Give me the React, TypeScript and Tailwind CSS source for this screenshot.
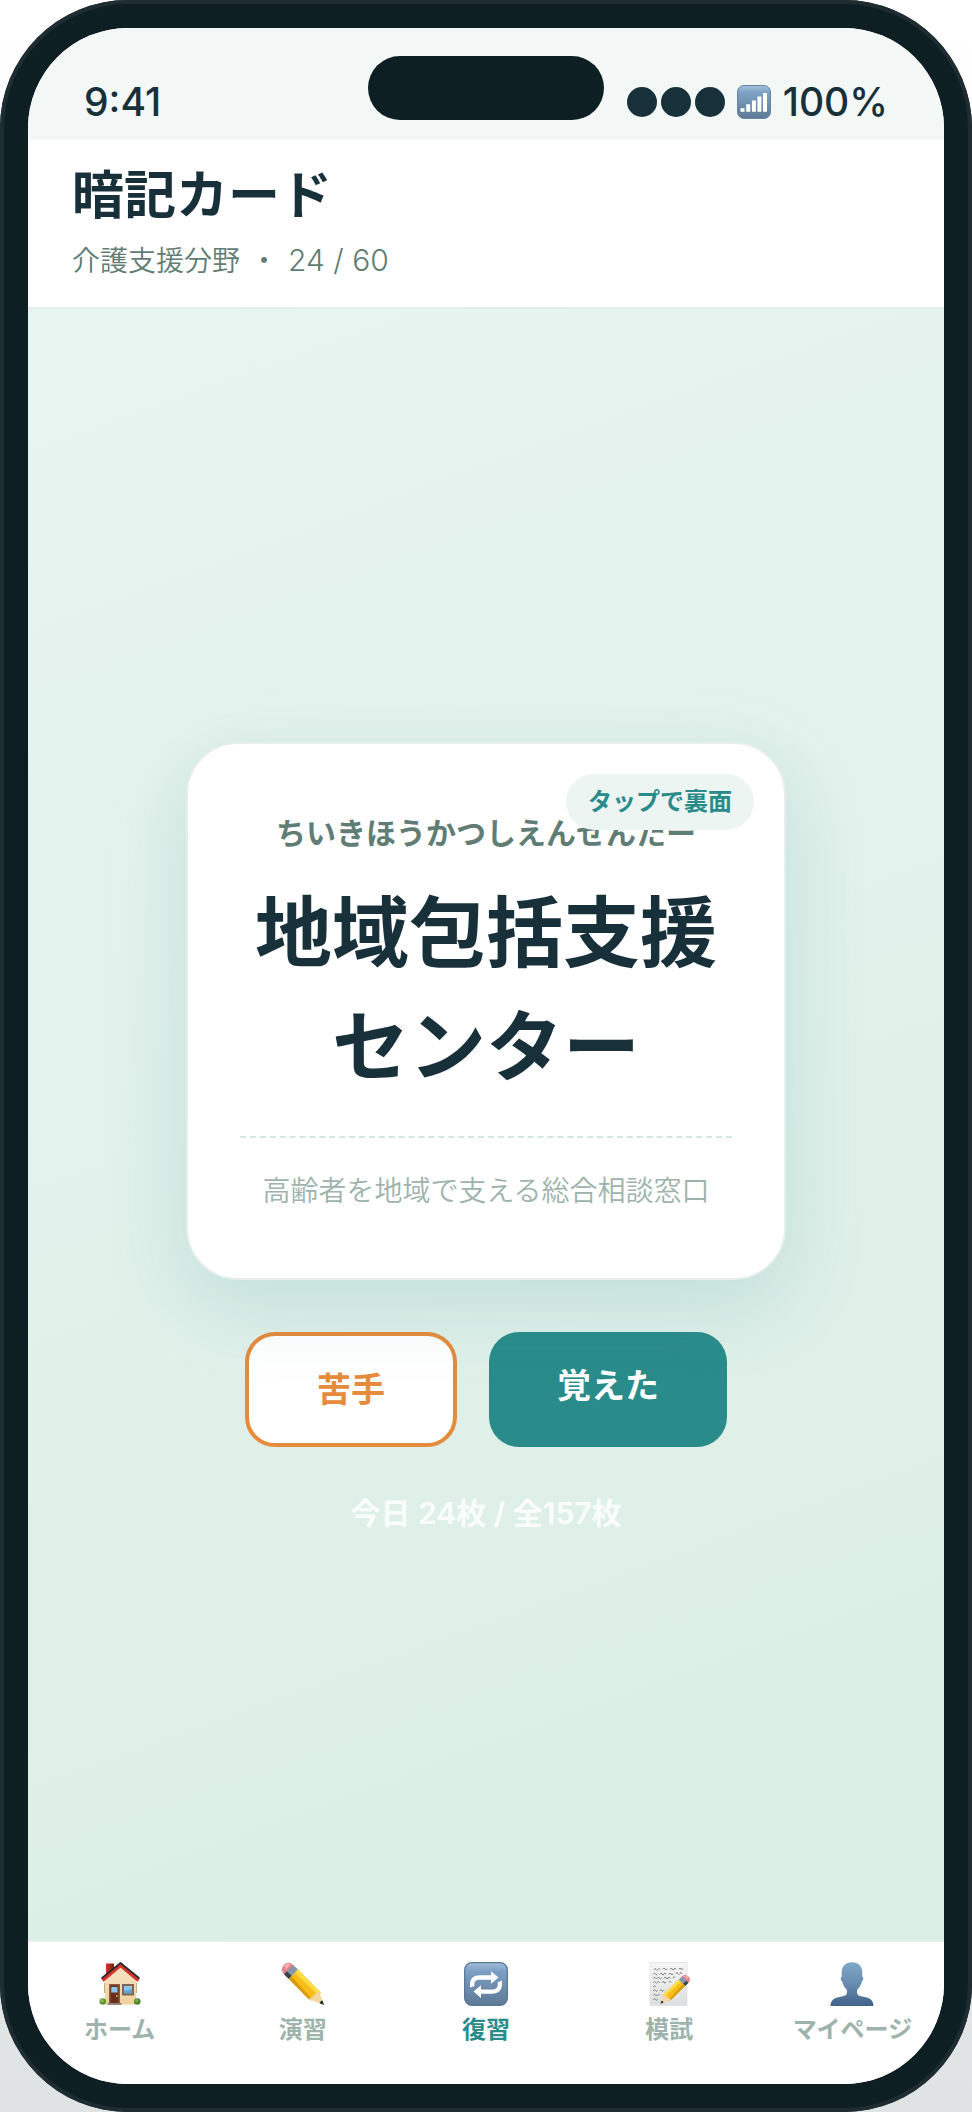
import type { ReactNode } from 'react';

function SignalIcon() {
  return (
    <svg viewBox="0 0 34 34" className="h-[34px] w-[34px]" aria-hidden="true">
      <defs>
        <linearGradient id="signalBg" x1="0" y1="0" x2="0" y2="1">
          <stop offset="0" stopColor="#a9c3d9" />
          <stop offset="0.2" stopColor="#7fa3c6" />
          <stop offset="1" stopColor="#5d7894" />
        </linearGradient>
      </defs>
      <rect x="0.5" y="0.5" width="33" height="33" rx="6.5" fill="url(#signalBg)" stroke="#6886a3" />
      <path
        d="M3.5 23.2h4v3.6h-4zM9.2 19.3h4v7.5h-4zM14.9 15.4h4v11.4h-4zM20.4 11.6h4v15.2h-4zM26 8h4v18.8h-4z"
        fill="#fff"
      />
    </svg>
  );
}

function HomeIcon() {
  return (
    <svg viewBox="0 0 44 44" className="h-11 w-11" aria-hidden="true">
      <defs>
        <linearGradient id="wall" x1="0" y1="0" x2="0" y2="1">
          <stop offset="0" stopColor="#f7e6c6" />
          <stop offset="1" stopColor="#edd09c" />
        </linearGradient>
        <linearGradient id="chimney" x1="0" y1="0" x2="1" y2="0">
          <stop offset="0" stopColor="#d8372f" />
          <stop offset="1" stopColor="#7c1a17" />
        </linearGradient>
      </defs>
      <path d="M8 1.5h8v12l-8 5z" fill="url(#chimney)" />
      <path d="M7 17 22.5 4 38 17v25.5H7z" fill="url(#wall)" />
      <path d="M6.5 21v10M38.5 21v10" stroke="#c3ad87" strokeWidth="1" />
      <path d="M4.5 18.5 22.5 3.5l18 15" fill="none" stroke="#d9332e" strokeWidth="3.4" />
      <path d="M3.5 16.5 22.5 1l19 15.5" fill="none" stroke="#29292d" strokeWidth="1.8" />
      <path d="M11 22h11v20H11z" fill="#8b5b3e" />
      <path d="M12.5 23.5h8V42h-8z" fill="#6b2d1c" />
      <path d="M13.3 25h6.2v5.5h-6.2z" fill="#8ec9ec" />
      <circle cx="18.8" cy="34" r="0.9" fill="#e3b347" />
      <path d="M24 22h12v11.5H24z" fill="#866550" />
      <path d="M26 24h8v7.5h-8z" fill="#5aa6dc" />
      <path d="M26 24h8v3l-8 2z" fill="#8cc7ec" />
      <path d="M9.5 41h14v2h-14z" fill="#93887e" />
      <circle cx="4.8" cy="39.5" r="3.3" fill="#5f9637" />
      <circle cx="39.3" cy="39.5" r="3.3" fill="#4b842e" />
      <circle cx="4.2" cy="38.6" r="1.7" fill="#8cbd4c" />
      <circle cx="38.6" cy="38.6" r="1.7" fill="#7eb040" />
    </svg>
  );
}

function PencilShape() {
  return (
    <g>
      <path d="M3.2 12.5 12.5 3.4c-3.2-3.8-7-3-9.6-.4C.3 5.7 0 9 3.2 12.5z" fill="#e9818a" />
      <path d="M3.2 3.5c2-2 4.5-2.6 6.6-1.2L5 7.5z" fill="#f5adb2" />
      <path d="M3 12.2 12.2 3 17 7.6 7.8 17z" fill="#8197ab" />
      <path d="M3 12.2 6 9.2 10.8 14 7.8 17z" fill="#3d434a" />
      <path d="M7.8 17 17 7.6 40 31l-9.2 7.5L27 36.5z" fill="#f8bd16" />
      <path d="M13.8 10.8 17 7.6 40 31l-3 2z" fill="#ffdb45" />
      <path d="M7.8 17 10.5 14.3 31 37l-.5 1.5L27 36.5z" fill="#d99a0b" />
      <path d="M28 37.3c.8-1.6 2-2 3.6-1.8 0-1.9.8-2.800 2.600-2.800.2-1.700 1.400-2.600 4-2.900L43 43z" fill="#f5d6a0" />
      <path d="M38.6 41.2c.4-1.400 1.400-2.300 2.900-2.600L43 43z" fill="#25262a" />
    </g>
  );
}

function PencilIcon() {
  return (
    <svg viewBox="0 0 44 44" className="h-11 w-11" aria-hidden="true">
      <PencilShape />
    </svg>
  );
}

function RepeatIcon() {
  return (
    <svg viewBox="0 0 44 44" className="h-11 w-11" aria-hidden="true">
      <defs>
        <linearGradient id="repeatBg" x1="0" y1="0" x2="0" y2="1">
          <stop offset="0" stopColor="#a5c0da" />
          <stop offset="0.2" stopColor="#7b9fc4" />
          <stop offset="1" stopColor="#5e7995" />
        </linearGradient>
      </defs>
      <rect x="0.6" y="0.6" width="42.8" height="42.8" rx="7.5" fill="url(#repeatBg)" stroke="#5a7896" strokeWidth="1.2" />
      <path
        d="M6 25.500v-3C6 16 10 13.300 15.500 13.300h11.500V9.300l7.500 6.200-7.500 6.200v-4H16c-4 0-5.700 1.500-5.700 4.800v1.800z"
        fill="#fff"
      />
      <path
        d="M38 18.500v3.500c0 6.500-4 9.700-9.500 9.700H17v4.300l-7.500-6.500 7.500-6.200v4.100h11c4 0 5.700-1.500 5.700-5v-2z"
        fill="#fff"
      />
    </svg>
  );
}

function MemoIcon() {
  return (
    <svg viewBox="0 0 44 44" className="h-11 w-11" aria-hidden="true">
      <defs>
        <linearGradient id="paper" x1="0" y1="0" x2="0" y2="1">
          <stop offset="0" stopColor="#f6f6f6" />
          <stop offset="1" stopColor="#dedfe0" />
        </linearGradient>
      </defs>
      <path d="M3 .5h37v43H3z" fill="url(#paper)" stroke="#d8d9da" strokeWidth="0.6" />
      <g fill="none" stroke="#6c6f73" strokeWidth="0.9" strokeLinecap="round">
        <path d="M7 7.500q1-2 2 0t2 0 2-.5M16 7q1-2 2 0t2 0M23 7q1-1.500 2 0t2 0 2 0M32 6.800q1-1.500 2 0t2 0" />
        <path d="M6.500 12q1-2 2 0t2 0M13 12q1-2 2 0t2 0 2 0M22 12q1-2 2 0t2 0M29 11.500q1-2 2 0t2 0 2 0" />
        <path d="M6.500 16q1-2 2 0t2 0 2 0 2 0M17 16q1-2 2 0t2 0 2 0M26 15.500q1-2 2 0" />
        <path d="M6.500 20.300q1-2 2 0t2 0 2 0M15 20.300q1-2 2 0t2 0M22 20q1-2 2 0" />
        <path d="M6.500 24.300q1-1 2 0M6.500 28.500q1-2 2 0t2 0M13 28.500q1-2 2 0t2 0" />
        <path d="M6.500 33q1-2 2 0t2 0 2 0M6.500 37.500q1-2 2 0t2 0" />
      </g>
      <g transform="translate(43.5 12.5) scale(-0.7 0.68)">
        <PencilShape />
      </g>
    </svg>
  );
}

function PersonIcon() {
  return (
    <svg viewBox="0 0 44 44" className="h-11 w-11" aria-hidden="true">
      <defs>
        <linearGradient id="person" x1="0" y1="0" x2="0" y2="1">
          <stop offset="0" stopColor="#81a8c9" />
          <stop offset="0.5" stopColor="#668cb0" />
          <stop offset="1" stopColor="#436288" />
        </linearGradient>
      </defs>
      <path
        d="M22 .3c6.300 0 10.300 4 10.300 10.200v4.300c1.500.2 1.200 3.300-.5 5-1 3.700-2.600 6-4.700 8v3c0 2.600 2.400 3.300 6.500 3.900 6 .9 9.900 3.500 9.900 9.300H.5c0-5.800 3.900-8.400 9.900-9.300 4.100-.6 6.500-1.300 6.500-3.900v-3c-2.100-2-3.700-4.300-4.700-8-1.700-1.700-2-4.800-.5-5v-4.300C11.700 4.300 15.700.3 22 .3z"
        fill="url(#person)"
      />
    </svg>
  );
}

const tabs: { label: string; icon: ReactNode; active?: boolean }[] = [
  { label: 'ホーム', icon: <HomeIcon /> },
  { label: '演習', icon: <PencilIcon /> },
  { label: '復習', icon: <RepeatIcon />, active: true },
  { label: '模試', icon: <MemoIcon /> },
  { label: 'マイページ', icon: <PersonIcon /> },
];

function StatusBar() {
  return (
    <div className="relative flex h-28 shrink-0 items-end justify-between bg-[#f3f7f6] px-14 pb-3 text-[39px] leading-[52px] font-medium">
      <span>9:41</span>
      <div className="absolute top-7 left-1/2 h-16 w-[236px] -translate-x-1/2 rounded-full bg-[#0d1f23]" />
      <div className="flex items-center gap-3">
        <div className="flex gap-1">
          <i className="size-[30px] rounded-full bg-[#17303a]" />
          <i className="size-[30px] rounded-full bg-[#17303a]" />
          <i className="size-[30px] rounded-full bg-[#17303a]" />
        </div>
        <SignalIcon />
        <span>100%</span>
      </div>
    </div>
  );
}

function FlashCard() {
  return (
    <section className="relative z-10 w-full max-w-[600px] rounded-[52px] border-2 border-[#e6efec] bg-white px-[52px] py-[66px] text-center shadow-[0_24px_80px_rgba(42,140,136,0.18)]">
      <p className="text-[30px] leading-[46px] font-bold text-[#5f7d74]">ちいきほうかつしえんせんたー</p>
      <h2 className="mt-5 text-[77px] leading-[114px] font-bold">
        地域包括支援
        <br />
        センター
      </h2>
      <p className="mt-8 border-t-2 border-dashed border-[#d0e6df] pt-8 text-[28px] leading-[42px] font-[350] text-[#9db3ac]">
        高齢者を地域で支える総合相談窓口
      </p>
      <button
        type="button"
        className="absolute top-[30px] right-[30px] h-14 rounded-full bg-[#ecf5f2] px-[22px] text-[24px] leading-9 font-bold text-[#2a8c8a]"
      >
        タップで裏面
      </button>
    </section>
  );
}

export default function App() {
  return (
    <div className="min-h-screen bg-[linear-gradient(180deg,#ffffff,#e0e3e4)] font-['Inter','Noto_Sans_CJK_JP',sans-serif] text-[#17303a]">
      <div className="flex min-h-screen flex-col rounded-[128px] bg-[#0d1f23] p-7 shadow-[inset_0_0_0_4px_#1f2c31]">
        <div className="flex grow flex-col overflow-hidden rounded-[100px] bg-white">
          <StatusBar />
          <header className="border-b-2 border-[#e3eeea] bg-white px-11 pt-5 pb-6">
            <h1 className="text-[52px] leading-[72px] font-bold">暗記カード</h1>
            <p className="mt-1.5 flex items-baseline gap-2.5 text-[28px] leading-[44px] font-[350] text-[#5f7d74]">
              <span>介護支援分野</span>
              <span>・</span>
              <span className="text-[30px]">24 / 60</span>
            </p>
          </header>
          <main className="flex grow flex-col items-center justify-center bg-[linear-gradient(160deg,#e8f4f0,#daeee5)] px-8 pt-7">
            <FlashCard />
            <div className="mt-[52px] flex gap-8 text-[34px] leading-[51px] font-bold">
              <button type="button" className="rounded-[30px] border-4 border-[#e58b3c] bg-white px-16 py-7 text-[#e58b3c]">
                <span className="px-1">苦手</span>
              </button>
              <button type="button" className="flex items-start rounded-[30px] bg-[#2a8c8a] px-16 py-7 text-white">
                <span className="px-1">覚えた</span>
              </button>
            </div>
            <p className="mt-11 text-[30px] leading-[44px] font-semibold text-white/85">今日 24枚 / 全157枚</p>
          </main>
          <nav className="grid shrink-0 grid-cols-5 border-t-2 border-[#e6efec] bg-white pt-5 pb-[34px]">
            {tabs.map((tab) => (
              <a
                key={tab.label}
                href="#"
                aria-current={tab.active ? 'page' : undefined}
                className={`flex flex-col items-center gap-1 text-[24px] leading-10 font-bold whitespace-nowrap ${
                  tab.active ? 'text-[#2a8c8a]' : 'text-[#9db3ac]'
                }`}
              >
                {tab.icon}
                <span>{tab.label}</span>
              </a>
            ))}
          </nav>
        </div>
      </div>
    </div>
  );
}
